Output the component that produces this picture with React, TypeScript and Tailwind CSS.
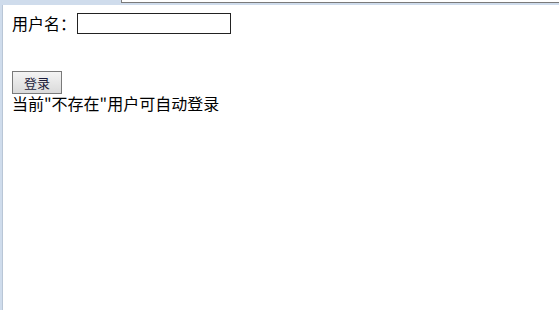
import React from "react";

export default function App() {
  const font = { fontFamily: '"SimSun","Noto Sans CJK SC","Liberation Sans",sans-serif' };
  return (
    <div className="w-[559px] h-[310px] bg-white overflow-hidden flex flex-col" style={font}>
      <div className="flex h-[5px] shrink-0">
        <div className="w-[121px] bg-[#cfdcec]" />
        <div className="flex-1 flex flex-col">
          <div className="h-[2px] flex">
            <div className="w-[1px] bg-[#808080]" />
          </div>
          <div className="h-[1px] bg-[#7a7a7a]" />
          <div className="h-[2px] bg-[#cfdcec]" />
        </div>
      </div>
      <div className="flex flex-1">
        <div className="w-[2px] bg-[#cfdcec]" />
        <div className="w-[1px] bg-[#b9c6d6]" />
        <div className="flex-1 pl-[9px] flex flex-col items-start">
          <div className="mt-[8px] h-[21px] flex items-center">
            <span className="text-[16px] leading-[21px] text-black">用户名：</span>
            <input className="ml-[1px] w-[154px] h-[21px] border border-[#222] bg-white outline-none" />
          </div>
          <button className="mt-[37px] w-[50px] h-[23px] border border-[#7a7a7a] bg-gradient-to-b from-[#f4f4f4] to-[#dadada] text-[13px] leading-[21px] text-[#1a1a3a] flex items-center justify-center">
            登录
          </button>
          <div className="text-[16px] leading-[19px] text-black">当前"不存在"用户可自动登录</div>
        </div>
      </div>
    </div>
  );
}
